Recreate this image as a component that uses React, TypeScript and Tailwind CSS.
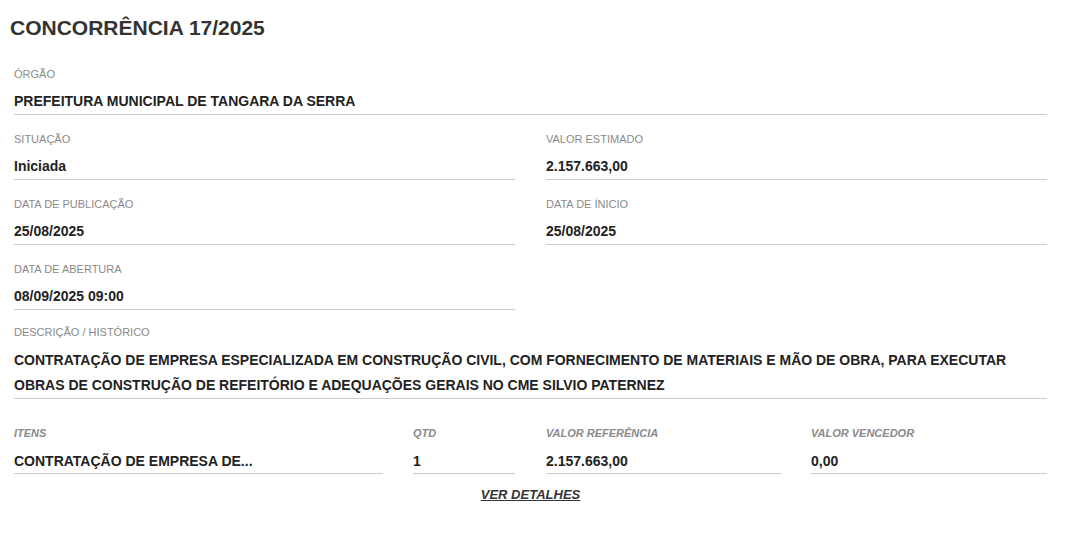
import React from "react";

function Field({ label, value, className = "" }: { label: string; value: string; className?: string }) {
  return (
    <div className={"flex flex-col " + className}>
      <div className="text-[11px] leading-[14px] text-[#8a8a8a]">{label}</div>
      <div className="mt-[12px] pb-[5px] text-[14px] leading-[16px] font-bold text-[#222] border-b border-[#cccccc]">{value}</div>
    </div>
  );
}

function ItemCol({ label, value, className = "" }: { label: string; value: string; className?: string }) {
  return (
    <div className={"flex flex-col " + className}>
      <div className="text-[11px] leading-[14px] italic font-bold text-[#8a8a8a]">{label}</div>
      <div className="mt-[13px] pb-[4px] text-[14px] leading-[16px] font-bold text-[#222] border-b border-[#cccccc]">{value}</div>
    </div>
  );
}

export default function App() {
  return (
    <div className="bg-white w-[1072px] h-[540px] font-['Liberation_Sans',Arial,sans-serif]">
      <h1 className="pl-[10px] pt-[16px] text-[21px] leading-[24px] font-bold text-[#333]">CONCORRÊNCIA 17/2025</h1>
      <div className="pl-[14px] w-[1047px] pt-[27px]">
        <Field label="ÓRGÃO" value="PREFEITURA MUNICIPAL DE TANGARA DA SERRA" />
        <div className="grid grid-cols-2 gap-x-[31px] gap-y-[17px] mt-[17px]">
          <Field label="SITUAÇÃO" value="Iniciada" />
          <Field label="VALOR ESTIMADO" value="2.157.663,00" />
          <Field label="DATA DE PUBLICAÇÃO" value="25/08/2025" />
          <Field label="DATA DE ÍNICIO" value="25/08/2025" />
          <Field label="DATA DE ABERTURA" value="08/09/2025 09:00" />
        </div>
        <div className="mt-[15px] flex flex-col">
          <div className="text-[11px] leading-[14px] text-[#8a8a8a]">DESCRIÇÃO / HISTÓRICO</div>
          <div className="mt-[9px] text-[14px] leading-[25px] font-bold text-[#222] tracking-[-0.01px] border-b border-[#cccccc]">
            CONTRATAÇÃO DE EMPRESA ESPECIALIZADA EM CONSTRUÇÃO CIVIL, COM FORNECIMENTO DE MATERIAIS E MÃO DE OBRA, PARA EXECUTAR OBRAS DE CONSTRUÇÃO DE REFEITÓRIO E ADEQUAÇÕES GERAIS NO CME SILVIO PATERNEZ
          </div>
        </div>
        <div className="mt-[27px] flex gap-[30px]">
          <ItemCol label="ITENS" value="CONTRATAÇÃO DE EMPRESA DE..." className="w-[369px]" />
          <ItemCol label="QTD" value="1" className="w-[102px]" />
          <ItemCol label="VALOR REFERÊNCIA" value="2.157.663,00" className="w-[235px] ml-[1px]" />
          <ItemCol label="VALOR VENCEDOR" value="0,00" className="flex-1" />
        </div>
        <div className="mt-[13px] text-center text-[13px] leading-[16px]">
          <a className="italic font-bold underline text-[#333]">VER DETALHES</a>
        </div>
      </div>
    </div>
  );
}
